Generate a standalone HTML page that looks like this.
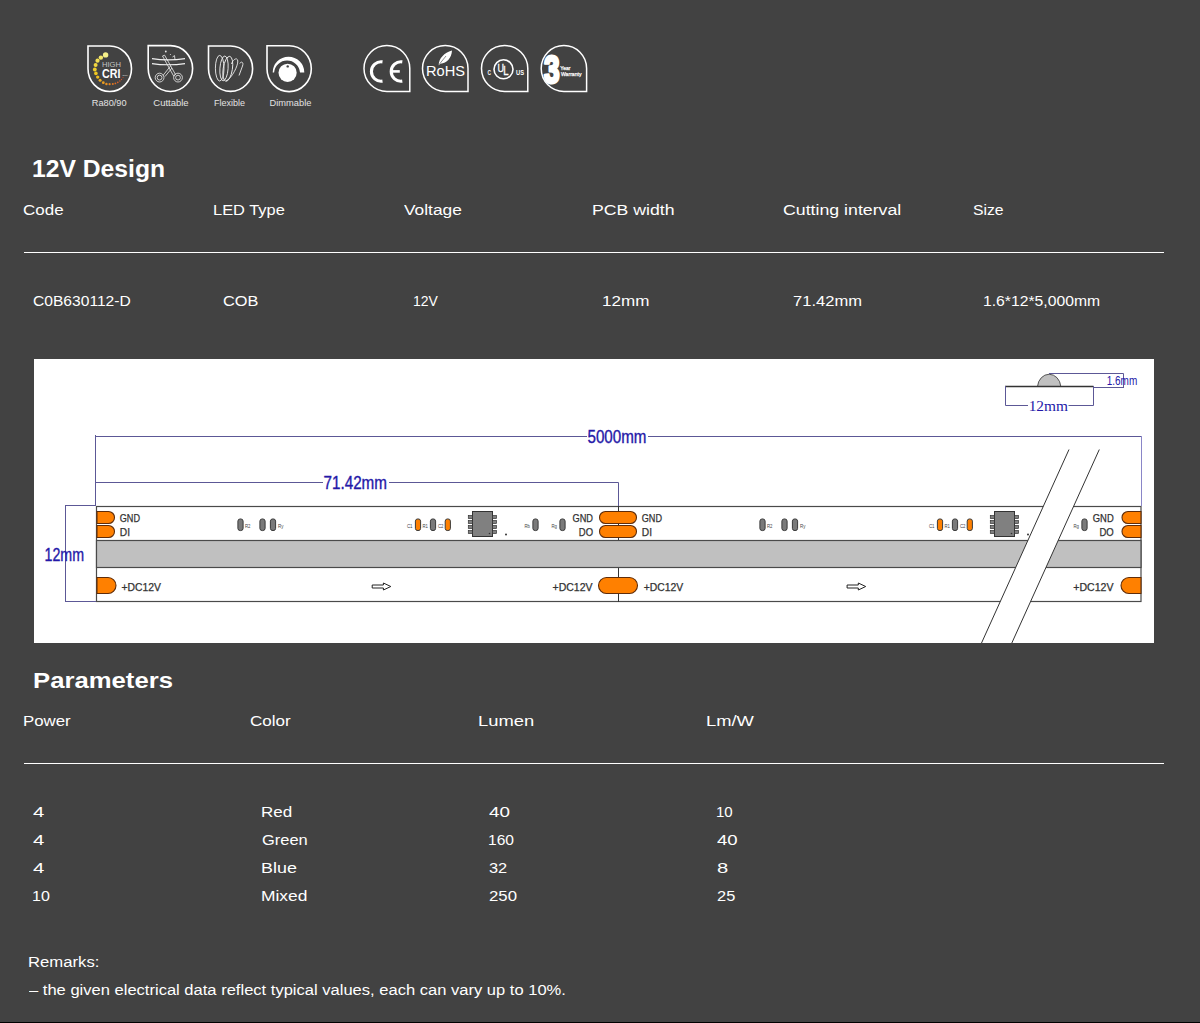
<!DOCTYPE html>
<html><head><meta charset="utf-8"><title>12V Design</title>
<style>
html,body{margin:0;padding:0;}
body{width:1200px;height:1023px;background:#424242;position:relative;overflow:hidden;font-family:"Liberation Sans",sans-serif;}
.t{position:absolute;margin:0;white-space:nowrap;transform-origin:0 0;}
.hr{position:absolute;left:24px;width:1140px;height:1px;background:#fff;}
.ico{position:absolute;top:44px;}
.lab{position:absolute;top:96px;font-size:9px;color:#e6e6e6;white-space:nowrap;transform-origin:0 0;}
#diag{position:absolute;left:34px;top:359px;}
#bot{position:absolute;left:0;top:1022px;width:1200px;height:1px;background:#000;}
</style></head>
<body>
<svg id="icons" style="position:absolute;left:80px;top:40px" width="520" height="75" viewBox="80 40 520 75" font-family="Liberation Sans, sans-serif">
<path d="M88.00 46.00 H109.75 A21.75 22.75 0 1 1 88.00 68.75 Z" fill="none" stroke="#fff" stroke-width="1.6"/>
<path d="M148.20 45.60 H170.40 A22.20 22.95 0 1 1 148.20 68.55 Z" fill="none" stroke="#fff" stroke-width="1.6"/>
<path d="M208.50 46.00 H230.55 A22.05 22.70 0 1 1 208.50 68.70 Z" fill="none" stroke="#fff" stroke-width="1.6"/>
<path d="M267.00 45.80 H289.15 A22.15 22.90 0 1 1 267.00 68.70 Z" fill="none" stroke="#fff" stroke-width="1.6"/>
<path d="M409.80 91.40 H386.90 A22.90 22.90 0 1 1 409.80 68.50 Z" fill="none" stroke="#fff" stroke-width="1.5"/>
<path d="M468.00 91.40 H445.25 A22.75 22.90 0 1 1 468.00 68.50 Z" fill="none" stroke="#fff" stroke-width="1.5"/>
<path d="M527.80 91.40 H504.65 A23.15 22.90 0 1 1 527.80 68.50 Z" fill="none" stroke="#fff" stroke-width="1.5"/>
<path d="M586.60 91.40 H563.90 A22.70 22.90 0 1 1 586.60 68.50 Z" fill="none" stroke="#fff" stroke-width="1.5"/>
<circle cx="105.6" cy="54.9" r="2.7" fill="#f6f08a"/>
<circle cx="100.9" cy="57.6" r="2.2" fill="#f3e66a"/>
<circle cx="97.5" cy="60.7" r="2.1" fill="#f2de55"/>
<circle cx="95.6" cy="65" r="2.0" fill="#f1d640"/>
<circle cx="94.8" cy="69.5" r="1.9" fill="#f0cf2a"/>
<circle cx="95.9" cy="73.4" r="1.8" fill="#efc722"/>
<circle cx="97.7" cy="77.1" r="1.7" fill="#eebd20"/>
<circle cx="100.1" cy="80.3" r="1.5" fill="#ecac20"/>
<circle cx="103.3" cy="82.7" r="1.4" fill="#ea9e20"/>
<circle cx="106.4" cy="84" r="1.2" fill="#e89020"/>
<circle cx="109.6" cy="84.2" r="1.1" fill="#e68420"/>
<circle cx="112.8" cy="84" r="1.0" fill="#e47820"/>
<circle cx="115.4" cy="83.4" r="0.9" fill="#e06c25"/>
<circle cx="117.8" cy="82.4" r="0.8" fill="#dc6228"/>
<circle cx="119.9" cy="81.1" r="0.75" fill="#d6582a"/>
<circle cx="121.5" cy="79.5" r="0.65" fill="#d0502c"/>
<circle cx="123" cy="77.6" r="0.6" fill="#c8482e"/>
<text x="102" y="66.8" font-size="8" fill="#c4c4c4" textLength="19" lengthAdjust="spacingAndGlyphs">HIGH</text>
<text x="102" y="77.9" font-size="12.4" font-weight="700" fill="#fff" textLength="18.4" lengthAdjust="spacingAndGlyphs">CRI</text>
<text x="122.2" y="76" font-size="2" fill="#ddd" textLength="5.5" lengthAdjust="spacingAndGlyphs">CRI</text>
<g fill="none" stroke="#f0f0f0" stroke-width="0.8">
<path d="M152 58.6 Q168 61.2 185 58.6 M152 63.6 Q168 66 185 63.6" stroke-width="1.1"/>
<path d="M162.5 56 L164.6 55.2 L175.5 74.5 L173.5 75.8 Z"/>
<path d="M172.5 57 L174.5 55.6 L175 60 M170.5 66 L163 75.5 M172 68 L165 76.5"/>
<circle cx="159.6" cy="77.6" r="4.4"/><circle cx="159.6" cy="77.6" r="2.4"/>
<circle cx="178" cy="77.6" r="4.4"/><circle cx="178" cy="77.6" r="2.4"/>
</g>
<circle cx="165.8" cy="51.5" r="0.9" fill="#e8e8e8"/><circle cx="170.4" cy="54.6" r="0.5" fill="#e8e8e8"/>
<g fill="none" stroke="#eee" stroke-width="0.9">
<ellipse cx="219.7" cy="68.2" rx="4.3" ry="12.8"/>
<ellipse cx="224" cy="68.4" rx="4.1" ry="12.4" transform="rotate(4 224 68.4)"/>
<ellipse cx="227.8" cy="68.8" rx="4.6" ry="12.6" transform="rotate(9 227.8 68.8)"/>
<path d="M226 81 C232 78 238 66 237.8 61 C237.5 57 233 59 231.5 64"/>
<path d="M239 75.5 L242.5 66 C244 62 241 61 239.8 63.5"/>
</g>
<circle cx="287.6" cy="72.8" r="9.1" fill="#fff"/>
<circle cx="287.7" cy="66.4" r="1.2" fill="#424242"/>
<path d="M272.7 72.5 A15.8 15.8 0 0 1 304.3 72.5 L300 72.5 A13 13.2 0 0 0 274.1 72.5 Z" fill="#fff"/>
<g fill="none" stroke="#fff" stroke-width="3.1">
<path d="M382.5 61.9 A9.7 9.7 0 1 0 382.5 81.1"/>
<path d="M402.3 61.9 A9.7 9.7 0 1 0 402.3 81.1"/>
</g>
<rect x="391.5" y="70.1" width="8.3" height="2.6" fill="#fff"/>
<text x="426" y="75.6" font-size="13.8" fill="#fff" textLength="39" lengthAdjust="spacingAndGlyphs" style="font-weight:500">RoHS</text>
<path d="M438.6 65.5 C439 58 444 53 452 50.5 C451.5 58 447 63 440.5 63.8 Z" fill="#fff"/>
<path d="M437.5 66.5 L446 56" stroke="#424242" stroke-width="0.6"/>
<circle cx="503.5" cy="69.3" r="9.5" fill="none" stroke="#fff" stroke-width="1.6"/>
<text x="497.5" y="72" font-size="10.5" fill="#fff" stroke="#fff" stroke-width="0.3" textLength="6.5" lengthAdjust="spacingAndGlyphs">U</text>
<text x="503.2" y="75.2" font-size="12" fill="#fff" stroke="#fff" stroke-width="0.3" textLength="5.3" lengthAdjust="spacingAndGlyphs">L</text>
<text x="487.6" y="75.2" font-size="7" font-weight="700" fill="#fff" textLength="3.5" lengthAdjust="spacingAndGlyphs">C</text>
<text x="516" y="75.2" font-size="7" font-weight="700" fill="#fff" textLength="8" lengthAdjust="spacingAndGlyphs">US</text>
<text x="544" y="82.6" font-size="38.5" font-weight="700" fill="#fff" stroke="#fff" stroke-width="3" stroke-linejoin="round" textLength="15.6" lengthAdjust="spacingAndGlyphs">3</text>
<text x="560.3" y="69.5" font-size="5.6" fill="#fff" stroke="#fff" stroke-width="0.25" textLength="10.2" lengthAdjust="spacingAndGlyphs">Year</text>
<text x="561" y="75.5" font-size="5.6" fill="#fff" stroke="#fff" stroke-width="0.25" textLength="20.5" lengthAdjust="spacingAndGlyphs">Warranty</text>
<g fill="#e2e2e2" font-size="8.7">
<text x="91.8" y="105.6" textLength="34.70" lengthAdjust="spacingAndGlyphs">Ra80/90</text>
<text x="153.3" y="105.6" textLength="35.30" lengthAdjust="spacingAndGlyphs">Cuttable</text>
<text x="214" y="105.6" textLength="31.00" lengthAdjust="spacingAndGlyphs">Flexible</text>
<text x="269.6" y="105.6" textLength="41.80" lengthAdjust="spacingAndGlyphs">Dimmable</text>
</g>
</svg>
<h2 class="t" style="left:31.76px;top:158.02px;font-size:23.13px;line-height:23.13px;font-weight:700;color:#fff;transform:scaleX(1.0671);font-family:"Liberation Sans", sans-serif;">12V Design</h2>
<h2 class="t" style="left:32.96px;top:669.94px;font-size:22.40px;line-height:22.40px;font-weight:700;color:#fff;transform:scaleX(1.1478);font-family:"Liberation Sans", sans-serif;">Parameters</h2>
<div class="t" style="left:22.65px;top:202.37px;font-size:15.27px;line-height:15.27px;font-weight:400;color:#fff;transform:scaleX(1.1115);font-family:"Liberation Sans", sans-serif;">Code</div>
<div class="t" style="left:212.65px;top:202.37px;font-size:15.27px;line-height:15.27px;font-weight:400;color:#fff;transform:scaleX(1.0752);font-family:"Liberation Sans", sans-serif;">LED Type</div>
<div class="t" style="left:403.66px;top:202.37px;font-size:15.27px;line-height:15.27px;font-weight:400;color:#fff;transform:scaleX(1.1353);font-family:"Liberation Sans", sans-serif;">Voltage</div>
<div class="t" style="left:592.29px;top:202.37px;font-size:15.27px;line-height:15.27px;font-weight:400;color:#fff;transform:scaleX(1.1582);font-family:"Liberation Sans", sans-serif;">PCB width</div>
<div class="t" style="left:782.86px;top:202.37px;font-size:15.27px;line-height:15.27px;font-weight:400;color:#fff;transform:scaleX(1.1616);font-family:"Liberation Sans", sans-serif;">Cutting interval</div>
<div class="t" style="left:973.04px;top:202.37px;font-size:15.27px;line-height:15.27px;font-weight:400;color:#fff;transform:scaleX(1.0311);font-family:"Liberation Sans", sans-serif;">Size</div>
<div class="t" style="left:32.97px;top:293.37px;font-size:15.27px;line-height:15.27px;font-weight:400;color:#fff;transform:scaleX(1.0222);font-family:"Liberation Sans", sans-serif;">C0B630112-D</div>
<div class="t" style="left:222.93px;top:293.37px;font-size:15.27px;line-height:15.27px;font-weight:400;color:#fff;transform:scaleX(1.0701);font-family:"Liberation Sans", sans-serif;">COB</div>
<div class="t" style="left:412.70px;top:293.37px;font-size:15.27px;line-height:15.27px;font-weight:400;color:#fff;transform:scaleX(0.9147);font-family:"Liberation Sans", sans-serif;">12V</div>
<div class="t" style="left:602.47px;top:293.37px;font-size:15.27px;line-height:15.27px;font-weight:400;color:#fff;transform:scaleX(1.1171);font-family:"Liberation Sans", sans-serif;">12mm</div>
<div class="t" style="left:792.77px;top:293.37px;font-size:15.27px;line-height:15.27px;font-weight:400;color:#fff;transform:scaleX(1.0841);font-family:"Liberation Sans", sans-serif;">71.42mm</div>
<div class="t" style="left:982.82px;top:293.37px;font-size:15.27px;line-height:15.27px;font-weight:400;color:#fff;transform:scaleX(1.0301);font-family:"Liberation Sans", sans-serif;">1.6*12*5,000mm</div>
<div class="t" style="left:23.31px;top:713.27px;font-size:15.27px;line-height:15.27px;font-weight:400;color:#fff;transform:scaleX(1.1026);font-family:"Liberation Sans", sans-serif;">Power</div>
<div class="t" style="left:250.40px;top:713.27px;font-size:15.27px;line-height:15.27px;font-weight:400;color:#fff;transform:scaleX(1.1166);font-family:"Liberation Sans", sans-serif;">Color</div>
<div class="t" style="left:478.38px;top:713.27px;font-size:15.27px;line-height:15.27px;font-weight:400;color:#fff;transform:scaleX(1.2027);font-family:"Liberation Sans", sans-serif;">Lumen</div>
<div class="t" style="left:706.48px;top:713.27px;font-size:15.27px;line-height:15.27px;font-weight:400;color:#fff;transform:scaleX(1.2032);font-family:"Liberation Sans", sans-serif;">Lm/W</div>
<div class="t" style="left:28.12px;top:954.17px;font-size:15.27px;line-height:15.27px;font-weight:400;color:#fff;transform:scaleX(1.0926);font-family:"Liberation Sans", sans-serif;">Remarks:</div>
<div class="t" style="left:28.75px;top:982.17px;font-size:15.27px;line-height:15.27px;font-weight:400;color:#fff;transform:scaleX(1.0834);font-family:"Liberation Sans", sans-serif;">– the given electrical data reflect typical values, each can vary up to 10%.</div>
<div class="t" style="left:33.04px;top:804.17px;font-size:15.27px;line-height:15.27px;font-weight:400;color:#fff;transform:scaleX(1.3355);font-family:"Liberation Sans", sans-serif;">4</div>
<div class="t" style="left:261.00px;top:804.17px;font-size:15.27px;line-height:15.27px;font-weight:400;color:#fff;transform:scaleX(1.1136);font-family:"Liberation Sans", sans-serif;">Red</div>
<div class="t" style="left:489.08px;top:804.17px;font-size:15.27px;line-height:15.27px;font-weight:400;color:#fff;transform:scaleX(1.2316);font-family:"Liberation Sans", sans-serif;">40</div>
<div class="t" style="left:716.37px;top:804.17px;font-size:15.27px;line-height:15.27px;font-weight:400;color:#fff;transform:scaleX(0.9846);font-family:"Liberation Sans", sans-serif;">10</div>
<div class="t" style="left:33.04px;top:832.17px;font-size:15.27px;line-height:15.27px;font-weight:400;color:#fff;transform:scaleX(1.3355);font-family:"Liberation Sans", sans-serif;">4</div>
<div class="t" style="left:261.58px;top:832.17px;font-size:15.27px;line-height:15.27px;font-weight:400;color:#fff;transform:scaleX(1.0786);font-family:"Liberation Sans", sans-serif;">Green</div>
<div class="t" style="left:488.33px;top:832.17px;font-size:15.27px;line-height:15.27px;font-weight:400;color:#fff;transform:scaleX(1.0211);font-family:"Liberation Sans", sans-serif;">160</div>
<div class="t" style="left:717.08px;top:832.17px;font-size:15.27px;line-height:15.27px;font-weight:400;color:#fff;transform:scaleX(1.2160);font-family:"Liberation Sans", sans-serif;">40</div>
<div class="t" style="left:33.04px;top:860.17px;font-size:15.27px;line-height:15.27px;font-weight:400;color:#fff;transform:scaleX(1.3355);font-family:"Liberation Sans", sans-serif;">4</div>
<div class="t" style="left:260.92px;top:860.17px;font-size:15.27px;line-height:15.27px;font-weight:400;color:#fff;transform:scaleX(1.1733);font-family:"Liberation Sans", sans-serif;">Blue</div>
<div class="t" style="left:488.89px;top:860.17px;font-size:15.27px;line-height:15.27px;font-weight:400;color:#fff;transform:scaleX(1.0726);font-family:"Liberation Sans", sans-serif;">32</div>
<div class="t" style="left:716.64px;top:860.17px;font-size:15.27px;line-height:15.27px;font-weight:400;color:#fff;transform:scaleX(1.3235);font-family:"Liberation Sans", sans-serif;">8</div>
<div class="t" style="left:32.30px;top:888.17px;font-size:15.27px;line-height:15.27px;font-weight:400;color:#fff;transform:scaleX(1.0502);font-family:"Liberation Sans", sans-serif;">10</div>
<div class="t" style="left:260.96px;top:888.17px;font-size:15.27px;line-height:15.27px;font-weight:400;color:#fff;transform:scaleX(1.1395);font-family:"Liberation Sans", sans-serif;">Mixed</div>
<div class="t" style="left:488.66px;top:888.17px;font-size:15.27px;line-height:15.27px;font-weight:400;color:#fff;transform:scaleX(1.0982);font-family:"Liberation Sans", sans-serif;">250</div>
<div class="t" style="left:716.68px;top:888.17px;font-size:15.27px;line-height:15.27px;font-weight:400;color:#fff;transform:scaleX(1.0752);font-family:"Liberation Sans", sans-serif;">25</div>
<div class="hr" style="top:252px"></div>
<div class="hr" style="top:763px"></div>
<svg id="diag" width="1120" height="284" viewBox="34 359 1120 284" font-family="Liberation Sans, sans-serif">
<rect x="34" y="359" width="1120" height="284" fill="#fff"/>
<rect x="96.5" y="506.5" width="1044.5" height="95" fill="#fff" stroke="#4a4a4a" stroke-width="1.2"/>
<line x1="618.5" y1="506" x2="618.5" y2="602" stroke="#333" stroke-width="1"/>
<rect x="96.5" y="540.5" width="1044.5" height="27" fill="#c0c0c0" stroke="#4a4a4a" stroke-width="1.2"/>
<g stroke="#5c5896" stroke-width="1" fill="none">
<path d="M95.5 435 V506 M95.5 436.5 H587 M648 436.5 H1141.5 M95.5 482.5 H323 M389 482.5 H618.5 V506"/>
<path d="M1141.5 436 V506" stroke="#8a86c8"/>
<path d="M65.5 505.5 V602 M65 505.5 H96 M65 601.5 H96"/>
</g>
<g fill="#2418a8" stroke="#2418a8" stroke-width="0.35" font-size="17.5">
<text x="587.5" y="443" textLength="59" lengthAdjust="spacingAndGlyphs">5000mm</text>
<text x="323.5" y="488.5" textLength="63.5" lengthAdjust="spacingAndGlyphs">71.42mm</text>
<text x="44.5" y="560.5" textLength="39.5" lengthAdjust="spacingAndGlyphs">12mm</text>
</g>
<path d="M97 511.5 H108.50 A6.00 6.00 0 0 1 108.50 523.5 H97 Z" fill="#ff8000" stroke="#5e2c0a" stroke-width="1.1"/>
<path d="M97 525.5 H108.50 A6.00 6.00 0 0 1 108.50 537.5 H97 Z" fill="#ff8000" stroke="#5e2c0a" stroke-width="1.1"/>
<path d="M97 577.5 H108.00 A8.00 8.00 0 0 1 108.00 593.5 H97 Z" fill="#ff8000" stroke="#5e2c0a" stroke-width="1.1"/>
<rect x="599.5" y="511.5" width="37.00" height="12.00" rx="6.00" ry="6.00" fill="#ff8000" stroke="#5e2c0a" stroke-width="1.1"/>
<rect x="599.5" y="525.5" width="37.00" height="12.00" rx="6.00" ry="6.00" fill="#ff8000" stroke="#5e2c0a" stroke-width="1.1"/>
<rect x="598.5" y="577.5" width="39.00" height="16.00" rx="8.00" ry="8.00" fill="#ff8000" stroke="#5e2c0a" stroke-width="1.1"/>
<path d="M1141 511.5 H1128.00 A6.00 6.00 0 0 0 1128.00 523.5 H1141 Z" fill="#ff8000" stroke="#5e2c0a" stroke-width="1.1"/>
<path d="M1141 525.5 H1128.00 A6.00 6.00 0 0 0 1128.00 537.5 H1141 Z" fill="#ff8000" stroke="#5e2c0a" stroke-width="1.1"/>
<path d="M1141 577.5 H1129.00 A8.00 8.00 0 0 0 1129.00 593.5 H1141 Z" fill="#ff8000" stroke="#5e2c0a" stroke-width="1.1"/>
<g fill="#333" stroke="#333" stroke-width="0.25" font-size="10.2">
<text x="119.8" y="521.5" textLength="20.2" lengthAdjust="spacingAndGlyphs">GND</text>
<text x="119.8" y="535.7" textLength="10.2" lengthAdjust="spacingAndGlyphs">DI</text>
<text x="121.5" y="590.8" textLength="39.5" lengthAdjust="spacingAndGlyphs">+DC12V</text>
<text x="572.5" y="521.5" textLength="20.5" lengthAdjust="spacingAndGlyphs">GND</text>
<text x="578.8" y="535.7" textLength="14.2" lengthAdjust="spacingAndGlyphs">DO</text>
<text x="552.5" y="590.8" textLength="40" lengthAdjust="spacingAndGlyphs">+DC12V</text>
<text x="641.8" y="521.5" textLength="20.2" lengthAdjust="spacingAndGlyphs">GND</text>
<text x="641.8" y="535.7" textLength="10.2" lengthAdjust="spacingAndGlyphs">DI</text>
<text x="643.8" y="590.8" textLength="39.5" lengthAdjust="spacingAndGlyphs">+DC12V</text>
<text x="1092.8" y="521.5" textLength="20.9" lengthAdjust="spacingAndGlyphs">GND</text>
<text x="1099.4" y="535.7" textLength="14.3" lengthAdjust="spacingAndGlyphs">DO</text>
<text x="1073.3" y="590.8" textLength="40.2" lengthAdjust="spacingAndGlyphs">+DC12V</text>
</g>
<rect x="237.90" y="518.90" width="5.20" height="11.70" rx="2.6" ry="2.2" fill="#7a7a7a" stroke="#3a3a3a" stroke-width="1"/>
<text x="245" y="528" font-size="5.5" fill="#444" textLength="5.5" lengthAdjust="spacingAndGlyphs">R2</text>
<rect x="259.90" y="518.90" width="5.20" height="11.70" rx="2.6" ry="2.2" fill="#7a7a7a" stroke="#3a3a3a" stroke-width="1"/>
<rect x="270.40" y="518.90" width="5.20" height="11.70" rx="2.6" ry="2.2" fill="#7a7a7a" stroke="#3a3a3a" stroke-width="1"/>
<text x="278" y="528" font-size="5.5" fill="#444" textLength="5.5" lengthAdjust="spacingAndGlyphs">Ry</text>
<rect x="415.40" y="518.90" width="5.20" height="11.70" rx="2.6" ry="2.2" fill="#ff8000" stroke="#3a3a3a" stroke-width="1"/>
<text x="407" y="528" font-size="5.5" fill="#444" textLength="5.5" lengthAdjust="spacingAndGlyphs">C1</text>
<rect x="430.40" y="518.90" width="5.20" height="11.70" rx="2.6" ry="2.2" fill="#7a7a7a" stroke="#3a3a3a" stroke-width="1"/>
<text x="422.5" y="528" font-size="5.5" fill="#444" textLength="5.5" lengthAdjust="spacingAndGlyphs">R1</text>
<rect x="445.20" y="518.90" width="5.20" height="11.70" rx="2.6" ry="2.2" fill="#ff8000" stroke="#3a3a3a" stroke-width="1"/>
<text x="438" y="528" font-size="5.5" fill="#444" textLength="5.5" lengthAdjust="spacingAndGlyphs">C2</text>
<rect x="472.5" y="511.5" width="20" height="25" fill="#808080" stroke="#333" stroke-width="1"/>
<rect x="468.3" y="515.5" width="4" height="3" fill="#808080" stroke="#333" stroke-width="0.7"/>
<rect x="492.5" y="515.5" width="4" height="3" fill="#808080" stroke="#333" stroke-width="0.7"/>
<rect x="468.3" y="520.5" width="4" height="3" fill="#808080" stroke="#333" stroke-width="0.7"/>
<rect x="492.5" y="520.5" width="4" height="3" fill="#808080" stroke="#333" stroke-width="0.7"/>
<rect x="468.3" y="525.5" width="4" height="3" fill="#808080" stroke="#333" stroke-width="0.7"/>
<rect x="492.5" y="525.5" width="4" height="3" fill="#808080" stroke="#333" stroke-width="0.7"/>
<rect x="468.3" y="530.5" width="4" height="3" fill="#808080" stroke="#333" stroke-width="0.7"/>
<rect x="492.5" y="530.5" width="4" height="3" fill="#808080" stroke="#333" stroke-width="0.7"/>
<circle cx="489.5" cy="533.5" r="0.8" fill="#333"/>
<circle cx="506" cy="534.5" r="1" fill="#333"/>
<rect x="532.90" y="518.90" width="5.20" height="11.70" rx="2.6" ry="2.2" fill="#7a7a7a" stroke="#3a3a3a" stroke-width="1"/>
<text x="524.5" y="528" font-size="5.5" fill="#444" textLength="5.5" lengthAdjust="spacingAndGlyphs">Rb</text>
<rect x="559.90" y="518.90" width="5.20" height="11.70" rx="2.6" ry="2.2" fill="#7a7a7a" stroke="#3a3a3a" stroke-width="1"/>
<text x="551.5" y="528" font-size="5.5" fill="#444" textLength="5.5" lengthAdjust="spacingAndGlyphs">Rg</text>
<rect x="759.90" y="518.90" width="5.20" height="11.70" rx="2.6" ry="2.2" fill="#7a7a7a" stroke="#3a3a3a" stroke-width="1"/>
<text x="767" y="528" font-size="5.5" fill="#444" textLength="5.5" lengthAdjust="spacingAndGlyphs">R2</text>
<rect x="781.90" y="518.90" width="5.20" height="11.70" rx="2.6" ry="2.2" fill="#7a7a7a" stroke="#3a3a3a" stroke-width="1"/>
<rect x="792.40" y="518.90" width="5.20" height="11.70" rx="2.6" ry="2.2" fill="#7a7a7a" stroke="#3a3a3a" stroke-width="1"/>
<text x="800" y="528" font-size="5.5" fill="#444" textLength="5.5" lengthAdjust="spacingAndGlyphs">Ry</text>
<rect x="937.40" y="518.90" width="5.20" height="11.70" rx="2.6" ry="2.2" fill="#ff8000" stroke="#3a3a3a" stroke-width="1"/>
<text x="929" y="528" font-size="5.5" fill="#444" textLength="5.5" lengthAdjust="spacingAndGlyphs">C1</text>
<rect x="952.40" y="518.90" width="5.20" height="11.70" rx="2.6" ry="2.2" fill="#7a7a7a" stroke="#3a3a3a" stroke-width="1"/>
<text x="944.5" y="528" font-size="5.5" fill="#444" textLength="5.5" lengthAdjust="spacingAndGlyphs">R1</text>
<rect x="967.20" y="518.90" width="5.20" height="11.70" rx="2.6" ry="2.2" fill="#ff8000" stroke="#3a3a3a" stroke-width="1"/>
<text x="960" y="528" font-size="5.5" fill="#444" textLength="5.5" lengthAdjust="spacingAndGlyphs">C2</text>
<rect x="994.5" y="511.5" width="20" height="25" fill="#808080" stroke="#333" stroke-width="1"/>
<rect x="990.3" y="515.5" width="4" height="3" fill="#808080" stroke="#333" stroke-width="0.7"/>
<rect x="1014.5" y="515.5" width="4" height="3" fill="#808080" stroke="#333" stroke-width="0.7"/>
<rect x="990.3" y="520.5" width="4" height="3" fill="#808080" stroke="#333" stroke-width="0.7"/>
<rect x="1014.5" y="520.5" width="4" height="3" fill="#808080" stroke="#333" stroke-width="0.7"/>
<rect x="990.3" y="525.5" width="4" height="3" fill="#808080" stroke="#333" stroke-width="0.7"/>
<rect x="1014.5" y="525.5" width="4" height="3" fill="#808080" stroke="#333" stroke-width="0.7"/>
<rect x="990.3" y="530.5" width="4" height="3" fill="#808080" stroke="#333" stroke-width="0.7"/>
<rect x="1014.5" y="530.5" width="4" height="3" fill="#808080" stroke="#333" stroke-width="0.7"/>
<circle cx="1011.5" cy="533.5" r="0.8" fill="#333"/>
<circle cx="1028" cy="534.5" r="1" fill="#333"/>
<rect x="1054.90" y="518.90" width="5.20" height="11.70" rx="2.6" ry="2.2" fill="#7a7a7a" stroke="#3a3a3a" stroke-width="1"/>
<text x="1046.5" y="528" font-size="5.5" fill="#444" textLength="5.5" lengthAdjust="spacingAndGlyphs">Rb</text>
<rect x="1081.90" y="518.90" width="5.20" height="11.70" rx="2.6" ry="2.2" fill="#7a7a7a" stroke="#3a3a3a" stroke-width="1"/>
<text x="1073.5" y="528" font-size="5.5" fill="#444" textLength="5.5" lengthAdjust="spacingAndGlyphs">Rg</text>
<path d="M372.2 585 H383.4 V583 L390.8 586.5 L383.4 590 V588 H372.2 Z" fill="#fff" stroke="#222" stroke-width="1"/>
<path d="M847.1 585 H858.3 V583 L865.7 586.5 L858.3 590 V588 H847.1 Z" fill="#fff" stroke="#222" stroke-width="1"/>
<path d="M1069 449.5 L981.3 643.5 L1011.6 643.5 L1099.3 449.5 Z" fill="#fff"/>
<path d="M1069 449.5 L981.3 643.5 M1099.3 449.5 L1011.6 643.5" stroke="#333" stroke-width="1"/>
<path d="M1037.5 386.5 A11.7 13.5 0 0 1 1060.8 386.5 Z" fill="#c0c0c0" stroke="#333" stroke-width="0.8"/>
<line x1="1005" y1="386.5" x2="1093.5" y2="386.5" stroke="#333" stroke-width="1.6"/>
<path d="M1049 373.5 H1123.5 V388 M1093.5 387.5 H1123.5 M1005.5 386 V405.5 H1028 M1068.5 405.5 H1093.5 V386" stroke="#5c5896" stroke-width="1" fill="none"/>
<text x="1106.7" y="385" font-size="12.5" fill="#2418a8" textLength="30.5" lengthAdjust="spacingAndGlyphs">1.6mm</text>
<text x="1028.7" y="410.5" font-size="14" font-family="Liberation Serif, serif" fill="#2418a8" textLength="39.3" lengthAdjust="spacingAndGlyphs">12mm</text>
</svg>
<div id="bot"></div>
</body></html>
